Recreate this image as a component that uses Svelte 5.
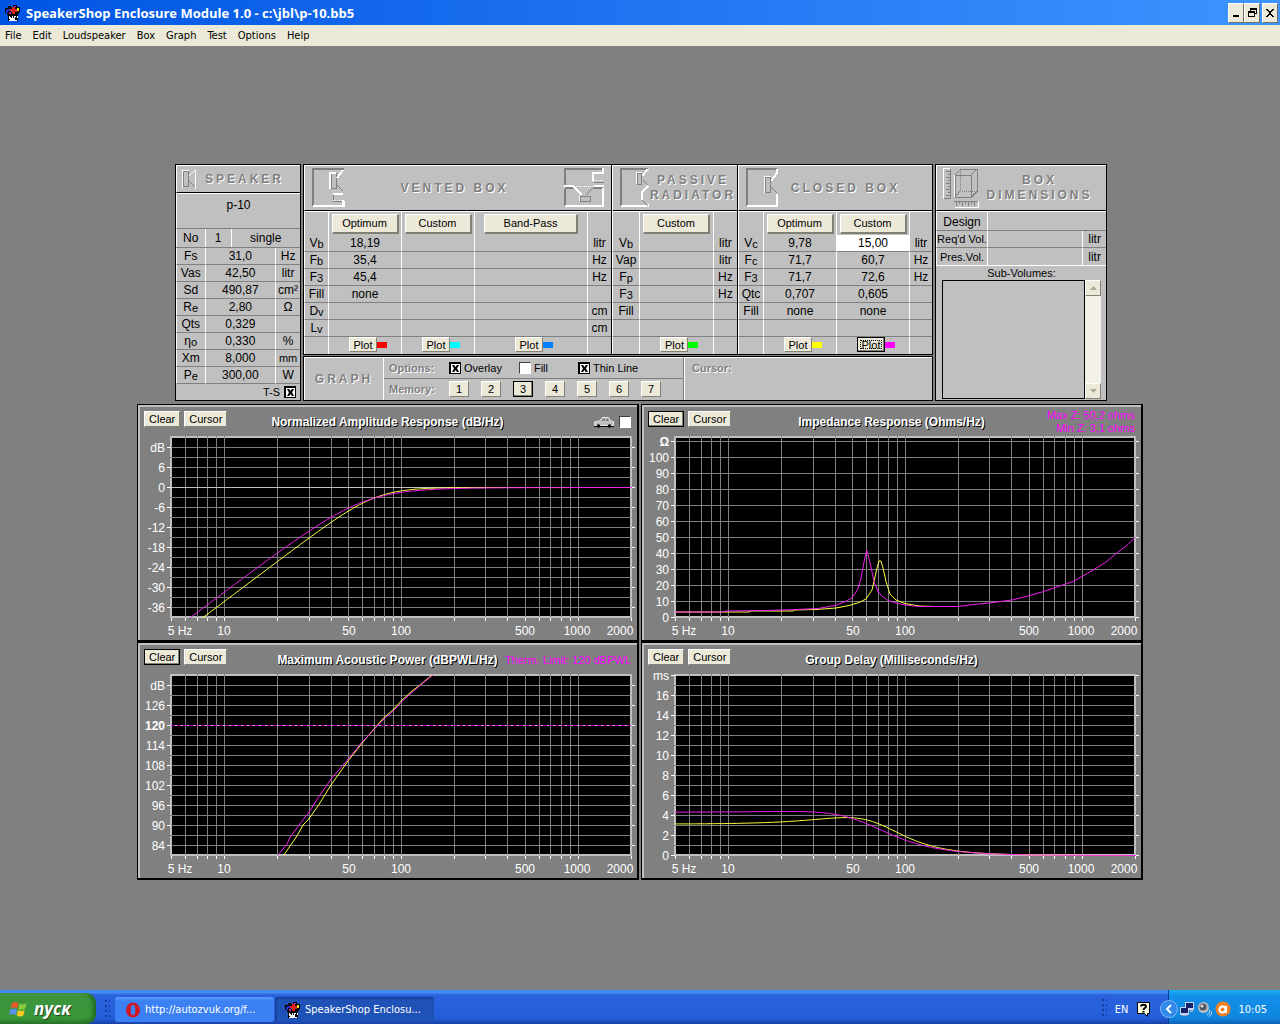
<svelte:options runes={false} />

<script>
  const menus = ['File', 'Edit', 'Loudspeaker', 'Box', 'Graph', 'Test', 'Options', 'Help'];

  // [label, subscript, value, unit]
  const speaker = [
    ['Fs', '', '31,0', 'Hz'],
    ['Vas', '', '42,50', 'litr'],
    ['Sd', '', '490,87', 'cm²'],
    ['R', 'e', '2,80', 'Ω'],
    ['Qts', '', '0,329', ''],
    ['η', 'o', '0,330', '%'],
    ['Xm', '', '8,000', 'mm'],
    ['P', 'e', '300,00', 'W']
  ];

  const sections = [
    {
      id: 'vented',
      title: 'VENTED BOX',
      widths: [24, 73, 73, 113, 24],
      heads: ['Optimum', 'Custom', 'Band-Pass'],
      rows: [
        ['V', 'b', ['18,19', '', ''], 'litr'],
        ['F', 'b', ['35,4', '', ''], 'Hz'],
        ['F', '3', ['45,4', '', ''], 'Hz'],
        ['Fill', '', ['none', '', ''], ''],
        ['D', 'v', ['', '', ''], 'cm'],
        ['L', 'v', ['', '', ''], 'cm']
      ],
      plots: ['#ff0000', '#00ffff', '#0080ff']
    },
    {
      id: 'passive',
      title: 'PASSIVE RADIATOR',
      widths: [27, 73, 24],
      heads: ['Custom'],
      rows: [
        ['V', 'b', [''], 'litr'],
        ['Vap', '', [''], 'litr'],
        ['F', 'p', [''], 'Hz'],
        ['F', '3', [''], 'Hz'],
        ['Fill', '', [''], ''],
        ['', '', [''], '']
      ],
      plots: ['#00ff00']
    },
    {
      id: 'closed',
      title: 'CLOSED BOX',
      widths: [25, 73, 73, 23],
      heads: ['Optimum', 'Custom'],
      rows: [
        ['V', 'c', ['9,78', '15,00'], 'litr'],
        ['F', 'c', ['71,7', '60,7'], 'Hz'],
        ['F', '3', ['71,7', '72,6'], 'Hz'],
        ['Qtc', '', ['0,707', '0,605'], ''],
        ['Fill', '', ['none', 'none'], ''],
        ['', '', ['', ''], '']
      ],
      plots: ['#ffff00', '#ff00ff']
    }
  ];

  const options = [['Overlay', true], ['Fill', false], ['Thin Line', true]];

  // plot area inside each graph's viewBox
  const L = 33, R = 493, T = 2, B = 182;
  const DECADE = (R - L) / Math.log10(2000 / 5);
  const fx = (f) => L + DECADE * Math.log10(f / 5);
  const freqs = [6, 7, 8, 9, 10, 20, 30, 40, 50, 60, 70, 80, 90, 100, 200, 300, 400, 500, 600, 700, 800, 900, 1000];
  const xLabels = [['5 Hz', 42], ['10', 86], ['50', 211], ['100', 263], ['500', 387], ['1000', 439], ['2000', 482]];

  function curve(fn) {
    let pts = [];
    for (let f = 5; f <= 2060; f *= 1.03) pts.push(`${fx(f).toFixed(1)},${fn(f).toFixed(1)}`);
    return pts.join(' ');
  }
  // second order closed box: level and group delay
  const level = (fc, q) => (f) => {
    const x = f / fc;
    const h = (x * x) / Math.sqrt((1 - x * x) ** 2 + (x / q) ** 2);
    return 52.5 - 20 * Math.log10(h) * (10 / 3);
  };
  const delay = (fc, q) => (f) => {
    const x = f / fc;
    const t = (1000 / (2 * Math.PI * fc * q)) * (1 + x * x) / ((1 - x * x) ** 2 + (x / q) ** 2);
    return 182.5 - t * 10;
  };

  const steps = (from, gap, n) => Array.from({ length: n }, (_, i) => from + i * gap);

  const graphs = [
    {
      id: 'amp',
      title: 'Normalized Amplitude Response (dB/Hz)',
      car: true,
      lines: steps(12.5, 10, 17),
      labels: ['dB', '6', '0', '-6', '-12', '-18', '-24', '-30', '-36'],
      start: 12.5, gap: 20,
      yellow: curve(level(71.7, 0.707)),
      pink: curve(level(60.7, 0.605))
    },
    {
      id: 'imp',
      title: 'Impedance Response (Ohms/Hz)',
      active: true,
      notes: ['Max Z: 50,2 ohms', 'Min Z: 3,1 ohms'],
      lines: steps(6.5, 16, 11),
      labels: ['Ω', '100', '90', '80', '70', '60', '50', '40', '30', '20', '10', '0'],
      start: 6.5, gap: 16,
      yellow: '33,177 107,177 109,176 151,176 153,175 174,174.5 194,173 207,170.5 217,167.5 224,164 230,155 232,146.5 235,133 237,126 239,126 241,133 244,146.5 248,159 254,165 263,168.5 277,171 294,171.5',
      pink: '33,177 80,177 84,176 124,175.5 154,174.5 176,173.5 193,170.5 202,167 210,163 216,154 219,143 222,127 224,118 225,115.5 226,120 229,132 232,146.5 236,156.5 240,161 246,165.5 254,168 263,170 277,171.5 316,171.5 331,169.5 347,168 370,165 386,161 400,157 412,153 422,149.5 431,146.5 439,142 452,134.5 464,127 476,117 486,109.5 493,102.5'
    },
    {
      id: 'pow',
      title: 'Maximum Acoustic Power (dBPWL/Hz)',
      active: true,
      notes: ['Therm. Limit: 120 dBPWL'],
      lines: steps(12.5, 10, 17),
      labels: ['dB', '126', '120', '114', '108', '102', '96', '90', '84'],
      start: 12.5, gap: 20,
      limit: 52.5,
      yellow: '146,182 152,173 159,163 165,152 170,147 180,133 193,112 210,88 225,69 236,56 246,44.5 256,36 263,28 274,18 282,12 294,2',
      pink: '140,182 149,171 152,164.5 161,152 170,140.5 181,123.5 193,106 209,87.5 225,68 236,56.5 246,46 256,37.5 263,29.5 274,19.5 282,12.5 295,2'
    },
    {
      id: 'delay',
      title: 'Group Delay (Milliseconds/Hz)',
      lines: steps(12.5, 10, 17),
      labels: ['ms', '16', '14', '12', '10', '8', '6', '4', '2', '0'],
      start: 2.5, gap: 20,
      yellow: curve(delay(71.7, 0.707)),
      pink: curve(delay(60.7, 0.605))
    }
  ];
</script>

{#snippet appIcon()}
  <svg class="app-icon" width="16" height="16" viewBox="0 0 16 16" shape-rendering="crispEdges" aria-hidden="true">
    <path fill="#000" d="M3 1h3v1h2V0h4v2h3v5h-1v2h-1v7H3v-6H2V8H0V3h3z" />
    <path fill="#e02020" d="M7 2h3v2h2v3h-2v2H7V6H5V4h2z" />
    <path fill="#2030d0" d="M2 4h3v2H3v2H1V5h1z" />
    <path fill="#c020c0" d="M4 7h2v2H4zM9 1h2v1H9z" />
    <path fill="#f0e020" d="M12 3h2v3h-2z" />
    <path fill="#20a0a0" d="M6 6h1v1H6z" />
    <path fill="#fff" d="M4 11h1v1h1v1h1v-2h1v2h1v-2h2v1h-1v3h2v1H4v-1h1v-1H4zM12 11h1v2h-1z" />
  </svg>
{/snippet}

{#snippet clearCursor(active)}
  <div class="graph-buttons">
    <button class="btn" class:default={active}>Clear</button>
    <button class="btn">Cursor</button>
  </div>
{/snippet}

<div class="screen">
  <header class="titlebar">
    {@render appIcon()}
    <h1>SpeakerShop Enclosure Module 1.0 - c:\jbl\p-10.bb5</h1>
    <div class="win-buttons">
      <button class="win" aria-label="Minimize"><svg width="11" height="12" shape-rendering="crispEdges"><path d="M2 8h6v2H2z" /></svg></button>
      <button class="win" aria-label="Restore"><svg width="11" height="12" shape-rendering="crispEdges"><path fill-rule="evenodd" d="M3 1h7v6H8v3H1V4h2zM4 3v1h4v2h1V3zM2 6v3h5V6z" /></svg></button>
      <button class="win close" aria-label="Close"><svg width="11" height="12" shape-rendering="crispEdges"><path d="M1 2h2v1h1v1h2V3h1V2h2v1H8v1H7v1H6v2h1v1h1v1h1v1H7V9H6V8H4v1H3v1H1V9h1V8h1V7h1V5H3V4H2V3H1z" /></svg></button>
    </div>
  </header>

  <nav class="menubar">
    {#each menus as menu}<button>{menu}</button>{/each}
  </nav>

  <main>
    <div class="panels">
      <section class="panel speaker">
        <div class="head small">
          <svg width="16" height="22" viewBox="0 0 16 22" fill="none" shape-rendering="crispEdges" aria-hidden="true">
            <path stroke="#fff" d="M1.5 19.5v-17h6M14.5 20.5v-19M8 8l6-6" />
            <path stroke="#808080" d="M2.5 3.5v15h5v-15zM8 13l6 6" />
          </svg>
          <h2>SPEAKER</h2>
        </div>
        <div class="name">p-10</div>
        <div class="count"><span>No</span><span>1</span><span>single</span></div>
        <table>
          <colgroup><col style="width: 23%" /><col style="width: 57%" /><col style="width: 20%" /></colgroup>
          <tbody>
            {#each speaker as [label, sub, value, unit]}
              <tr><th scope="row">{label}<span class="sub">{sub}</span></th><td>{value}</td><td class:tight={unit === 'mm'}>{unit}</td></tr>
            {/each}
          </tbody>
        </table>
        <label class="ts">T-S <input type="checkbox" checked /></label>
      </section>

      <div class="middle">
        <div class="panel boxes">
          {#each sections as s}
            <section class="box {s.id}">
              <div class="head">
                {#if s.id === 'vented'}
                  <svg width="34" height="42" viewBox="0 0 34 42" fill="none" shape-rendering="crispEdges" aria-hidden="true">
                    <path stroke="#808080" stroke-width="2" d="M33 2H2v37" />
                    <path stroke="#fff" stroke-width="2" d="M2 39h31v-5" />
                    <path stroke="#808080" d="M20.500 6.500h5v15h-5zM26 18l6 6" />
                    <path stroke="#fff" stroke-width="2" d="M19 22V6h6M26 11l6-8M22 27h10M32 33v6" />
                    <path stroke="#808080" d="M22.500 28v6M22 34.500h9" />
                    <path stroke="#fff" stroke-dasharray="1 1" d="M22 33.500h10" />
                  </svg>
                {:else if s.id === 'passive'}
                  <svg width="30" height="42" viewBox="0 0 30 42" fill="none" shape-rendering="crispEdges" aria-hidden="true">
                    <path stroke="#808080" stroke-width="2" d="M29 2H2v37" />
                    <path stroke="#fff" stroke-width="2" d="M2 39h27v-2M23 9l6-7M29 19l-6 6v8" />
                    <path stroke="#808080" d="M18.500 6.500h4v11h-4zM24 13l5 5M23 33l6 6" />
                    <path stroke="#fff" d="M17.500 17V5.500h5" />
                  </svg>
                {:else}
                  <svg width="34" height="42" viewBox="0 0 34 42" fill="none" shape-rendering="crispEdges" aria-hidden="true">
                    <path stroke="#808080" stroke-width="2" d="M32 2H2v37" />
                    <path stroke="#fff" stroke-width="2" d="M2 39h30V27M26 14l6-8V2" />
                    <path stroke="#808080" d="M20.500 10.500h5v15h-5zM26 20l6 6" />
                    <path stroke="#fff" d="M19.500 26V9.500h6" />
                  </svg>
                {/if}
                <h2>{s.title}</h2>
                {#if s.id === 'vented'}
                  <svg width="41" height="42" viewBox="0 0 41 42" fill="none" shape-rendering="crispEdges" aria-hidden="true">
                    <path stroke="#808080" stroke-width="2" d="M39 2H1v17M1 22v17M1 21h9M30 21h9" />
                    <path stroke="#fff" stroke-width="2" d="M39 21v18H1M0 19h10M30 19h10M10 20l8 8M39 1v5H29v8" />
                    <path stroke="#fff" d="M15.500 34v-5h10" />
                    <path stroke="#808080" d="M30 20l-8 8M16.500 29.500h10v5h-10zM30 15.500h10" />
                    <path stroke="#fff" stroke-dasharray="1 1" d="M10 19.500h20M30 13.500h10" />
                  </svg>
                {/if}
              </div>
              <table>
                <colgroup>{#each s.widths as w}<col style="width: {w}px" />{/each}</colgroup>
                <thead>
                  <tr><td></td>{#each s.heads as head}<th><button class="btn wide" class:band={head === 'Band-Pass'}>{head}</button></th>{/each}<td></td></tr>
                </thead>
                <tbody>
                  {#each s.rows as [label, sub, values, unit]}
                    <tr>
                      <th scope="row">{label}<span class="sub">{sub}</span></th>
                      {#each values as value}
                        <td>{#if value === '15,00'}<input class="edit" type="text" {value} aria-label="Custom Vc" />{:else}{value}{/if}</td>
                      {/each}
                      <td>{unit}</td>
                    </tr>
                  {/each}
                  <tr class="plots">
                    <td></td>
                    {#each s.plots as color}
                      <td><div class="plot"><button class="btn" class:default={color === '#ff00ff'} class:focused={color === '#ff00ff'}>Plot</button><i style="background: {color}"></i></div></td>
                    {/each}
                    <td></td>
                  </tr>
                </tbody>
              </table>
            </section>
          {/each}
        </div>

        <section class="panel graph-bar">
          <h2>GRAPH</h2>
          <div class="settings">
            <div class="options">
              <b>Options:</b>
              {#each options as [label, checked]}
                <label><input type="checkbox" {checked} />{label}</label>
              {/each}
            </div>
            <div class="memory">
              <b>Memory:</b>
              {#each [1, 2, 3, 4, 5, 6, 7] as n}<button class="btn" class:default={n === 3}>{n}</button>{/each}
            </div>
          </div>
          <div class="cursor"><b>Cursor:</b></div>
        </section>
      </div>

      <section class="panel dims">
        <div class="head">
          <svg width="36" height="42" viewBox="0 0 36 42" fill="none" shape-rendering="crispEdges" aria-hidden="true">
            <path stroke="#fff" d="M.5 32V1.500h6M12 40.500h23.500V34M11.500 30V8" />
            <path stroke="#808080" d="M7.500 2v29H1M3 4.500h4M5 7.500h2M3 10.500h4M5 13.500h2M3 16.500h4M5 19.500h2M3 22.500h4M5 25.500h2M3 28.500h4M11 34.500h24M13.500 35v4M16.500 35v2M19.500 35v4M22.500 35v2M25.500 35v4M28.500 35v2M31.500 35v4" />
            <path stroke="#808080" d="M12.500 8.500h16v22h-16zM12 8l6-6h16.500v22l-6 6M28 8l6-6" />
            <path stroke="#808080" stroke-dasharray="1 1" d="M17.500 3v21h16M17 24l-5 6" />
          </svg>
          <h2>BOX DIMENSIONS</h2>
        </div>
        <table>
          <colgroup><col style="width: 30%" /><col style="width: 56%" /><col style="width: 14%" /></colgroup>
          <tbody>
            <tr><th scope="row">Design</th><td colspan="2"></td></tr>
            <tr><th scope="row" class="tight">Req'd Vol.</th><td></td><td>litr</td></tr>
            <tr><th scope="row" class="tight">Pres.Vol.</th><td></td><td>litr</td></tr>
          </tbody>
        </table>
        <div class="subs">
          <span>Sub-Volumes:</span>
          <div class="list">
            <div class="items"></div>
            <div class="scroll">
              <button class="btn" aria-label="Scroll up"><svg width="7" height="4"><path d="M0 4h7L3.500 0z" /></svg></button>
              <button class="btn" aria-label="Scroll down"><svg width="7" height="4"><path d="M0 0h7L3.500 4z" /></svg></button>
            </div>
          </div>
        </div>
      </section>
    </div>

    <div class="graphs">
      {#each graphs as g}
        <section class="graph">
          <div class="graph-head">
            {@render clearCursor(g.active)}
            <h3>{g.title}</h3>
            <div class="notes">
              {#if g.car}
                <svg width="22" height="12" viewBox="0 0 22 12" aria-hidden="true">
                  <path fill="#c0c0c0" stroke="#e8e8e8" d="M1.500 9.500V6l5-1 3-3.500h6l2 3.500 3 .5v4z" />
                  <path fill="#808080" d="M8 5l2-2.500h2V5zM13 2.500h2L16 5h-3z" />
                  <path stroke="#000" d="M1 10.500h20" />
                  <circle cx="5.500" cy="10" r="1.800" /><circle cx="16.500" cy="10" r="1.800" />
                </svg>
                <input type="checkbox" aria-label="In-car response" />
              {:else if g.notes}
                {#each g.notes as note}<span>{note}</span>{/each}
              {/if}
            </div>
          </div>
          <svg class="chart" viewBox="0 0 499 205" role="img" aria-label={g.title}>
            <clipPath id="clip-{g.id}"><rect x={L} y={T} width={R - L + 1} height={B - T + 1} /></clipPath>
            <g shape-rendering="crispEdges">
              <rect class="frame" x={L} y={T} width={R - L} height={B - T} />
              {#each freqs as f}
                <line class="grid" x1={Math.round(fx(f)) + 0.5} x2={Math.round(fx(f)) + 0.5} y1={T - 1} y2={B} />
              {/each}
              {#each [5, ...freqs, 2000] as f}
                <line class="tick" x1={Math.round(fx(f)) + 0.5} x2={Math.round(fx(f)) + 0.5} y1={B + 1} y2={B + 4} />
              {/each}
              {#each g.lines as y}
                <line class="grid" class:zero={g.id === 'amp' && y === 52.5} x1={L - 2} x2={R} y1={y} y2={y} />
              {/each}
              {#each g.labels as label, i}
                <line class="tick" x1={L - 4} x2={L} y1={g.start + i * g.gap} y2={g.start + i * g.gap} />
                <line class="tick" x1={R + 1} x2={R + 4} y1={g.start + i * g.gap} y2={g.start + i * g.gap} />
              {/each}
            </g>
            {#if g.limit}
              <line class="zero" x1={L} x2={R} y1={g.limit} y2={g.limit} />
              <line class="limit" x1={L} x2={R} y1={g.limit} y2={g.limit} />
            {/if}
            {#each g.labels as label, i}
              <text x="27" y={g.start + i * g.gap + 4} text-anchor="end" class:bold={(g.limit && label === '120') || label === 'Ω'}>{label}</text>
            {/each}
            {#each xLabels as [label, x]}
              <text {x} y="200" text-anchor="middle">{label}</text>
            {/each}
            <g clip-path="url(#clip-{g.id})">
              <polyline class="yellow" points={g.yellow} />
              <polyline class="pink" points={g.pink} />
            </g>
          </svg>
        </section>
      {/each}
    </div>
  </main>

  <footer class="taskbar">
    <button class="start">
      <svg width="20" height="20" viewBox="0 0 20 20" aria-hidden="true">
        <path fill="#e8592b" d="M3 4c2-1.500 4-1.500 6.500 0L8.300 9.500C6 8.300 4 8.300 1.700 9.500z" />
        <path fill="#8ccb3a" d="M10.500 4.500c2.500 1.300 4.500 1.300 7-.2L16 9.800c-2.300 1.300-4.300 1.300-6.700.1z" />
        <path fill="#5a8ff0" d="M1.400 10.600c2.300-1.200 4.300-1.200 6.600 0L6.700 16c-2.300-1.200-4.300-1.200-6.500 0z" />
        <path fill="#fbc926" d="M9 11c2.400 1.200 4.400 1.200 6.700 0l-1.400 5.500c-2.300 1.300-4.300 1.300-6.600 0z" />
      </svg>
      <span>пуск</span>
    </button>
    <i class="grip"></i>
    <button class="task">
      <svg width="16" height="16" viewBox="0 0 16 16" aria-hidden="true">
        <ellipse cx="8" cy="8" rx="7" ry="7.500" fill="#d01820" /><ellipse cx="8" cy="8" rx="2.300" ry="5.200" fill="#3c81f3" />
      </svg>
      http://autozvuk.org/f...
    </button>
    <button class="task current">{@render appIcon()} SpeakerShop Enclosu...</button>
    <div class="lang">
      <i class="grip"></i>
      <span>EN</span>
      <svg width="14" height="15" viewBox="0 0 14 15" aria-hidden="true">
        <path fill="#ffffe1" stroke="#000" d="M.5.5h12v11h-2v3l-3-3h-7z" />
        <path fill="none" stroke="#000" stroke-width="2" d="M4 4.500C4 2 9 2 9 4.500 9 6 6.500 6 6.500 8M6.500 9v1.500" />
      </svg>
    </div>
    <div class="tray">
      <button class="expand" aria-label="Show hidden icons"><svg width="16" height="16" viewBox="0 0 16 16"><path fill="none" stroke="#fff" stroke-width="2" d="M10 4L6 8l4 4" /></svg></button>
      <svg width="16" height="16" viewBox="0 0 16 16" aria-hidden="true">
        <path fill="#c8d4e8" d="M6 1h9v8H6zM1 6h9v8H1z" /><path fill="#16226e" d="M7 2h7v5H7zM2 7h7v5H2z" /><path fill="#8fa4d0" d="M3 14h5v1H3zM11 9h3v2h-3z" />
      </svg>
      <svg width="16" height="16" viewBox="0 0 16 16" aria-hidden="true">
        <circle cx="6.500" cy="6.500" r="5.500" fill="#b8bcc0" /><circle cx="6" cy="6" r="3.500" fill="#50565c" /><circle cx="5" cy="5" r="1.500" fill="#e0e4e8" />
        <path fill="none" stroke="#c4dcf4" d="M10 14q3-1 3-5M12 15.500q3-2 3-5" />
      </svg>
      <svg width="16" height="16" viewBox="0 0 16 16" aria-hidden="true">
        <circle cx="8" cy="8" r="7.500" fill="#f08020" /><circle cx="7.500" cy="8.500" r="3" fill="none" stroke="#fff" stroke-width="2" /><path stroke="#fff" stroke-width="2" d="M11 5v7" />
      </svg>
      <time>10:05</time>
    </div>
  </footer>
</div>

<style>
  :global(body) { margin: 0; }
  .screen {
    display: flex;
    flex-direction: column;
    min-height: 100vh;
    background: #808080;
    font-family: "Liberation Sans", Arial, sans-serif;
    font-size: 12px;
    color: #000;
  }
  .screen :is(h1, h2, h3) { margin: 0; }
  svg { display: block; flex: none; }
  button, input { font: inherit; color: inherit; margin: 0; padding: 0; border: 0; border-radius: 0; }

  .titlebar {
    display: flex;
    align-items: center;
    gap: 5px;
    height: 25px;
    padding: 0 2px 0 5px;
    background: linear-gradient(90deg, #0054e3, #3d95ff);
  }
  .titlebar h1 {
    flex: 1;
    color: #fff;
    font: bold 13px/20px "Open Sans", sans-serif;
  }
  .win-buttons { display: flex; }
  .win {
    display: grid;
    place-items: center;
    width: 16px;
    height: 20px;
    background: #ece9d8;
    border: 1px solid;
    border-color: #fff #716f64 #716f64 #fff;
  }
  .close { margin-left: 2px; }

  .menubar {
    display: flex;
    gap: 11px;
    height: 21px;
    padding-left: 5px;
    background: #ece9d8;
    font: 11px "DejaVu Sans Condensed", sans-serif;
  }
  .menubar button { background: none; }

  main {
    flex: 1;
    display: flex;
    flex-direction: column;
    align-items: center;
    gap: 3px;
    padding: 118px 0 20px;
  }
  .panels {
    display: grid;
    grid-template-columns: 126fr 630fr 172fr;
    gap: 2px;
    box-sizing: border-box;
    width: 100%;
    max-width: 934px;
    padding-left: 2px;
  }
  .panel {
    min-width: 0;
    background: #c0c0c0;
    border: 1px solid #000;
    box-sizing: border-box;
  }
  .head {
    display: flex;
    align-items: center;
    height: 46px;
    box-sizing: border-box;
    padding: 0 6px;
    border-top: 1px solid #fff;
    border-left: 1px solid #fff;
    border-bottom: 1px solid #000;
  }
  .head.small { height: 28px; padding: 0 8px 0 4px; }
  h2 {
    flex: 1;
    color: #808080;
    font-size: 12px;
    line-height: 15px;
    letter-spacing: 3px;
    text-align: center;
    text-shadow: 1px 1px #fff;
  }
  .speaker, .dims {
    display: flex;
    flex-direction: column;
  }
  .name {
    height: 36px;
    line-height: 22px;
    text-align: center;
    border: 1px solid #fff;
    border-width: 1px 0 0 1px;
    border-bottom: 1px solid #808080;
    box-sizing: border-box;
  }
  .count {
    display: grid;
    grid-template-columns: 23% 21% 56%;
    line-height: 18px;
    text-align: center;
    border-bottom: 1px solid #808080;
  }
  .count span { border-left: 1px solid #fff; }

  table {
    width: 100%;
    table-layout: fixed;
    border-collapse: separate;
    border-spacing: 0;
  }
  th, td {
    height: 17px;
    box-sizing: border-box;
    padding: 0;
    line-height: 16px;
    font-weight: normal;
    text-align: center;
    white-space: nowrap;
    border-left: 1px solid #fff;
    border-bottom: 1px solid #808080;
  }
  thead th, thead td {
    height: 24px;
    border-bottom: 0;
    border-top: 1px solid #fff;
  }
  .plots td { vertical-align: top; border-bottom: 0; }
  .sub { font-size: 11px; vertical-align: -1px; line-height: 1px; }
  .tight { font-size: 11px; }
  .ts {
    display: flex;
    align-items: center;
    justify-content: flex-end;
    gap: 4px;
    flex: 1;
    padding-right: 4px;
    font-size: 11px;
  }

  .btn {
    height: 16px;
    background: #ece9d8;
    border: 1px solid;
    border-color: #fff #808074 #808074 #fff;
    font-size: 11px;
    line-height: 12px;
    white-space: nowrap;
  }
  .btn.default { border-color: #000; box-shadow: inset -1px -1px #808074; }
  .btn.wide {
    display: block;
    width: 67px;
    height: 20px;
    margin: 0 auto;
    border-width: 1px 2px 2px 1px;
  }
  .btn.band { width: 94px; }
  .plot {
    display: flex;
    align-items: center;
    justify-content: center;
    padding-left: 6px;
  }
  .plot .btn { width: 28px; height: 15px; }
  .plot .focused { outline: 1px dotted #000; outline-offset: -4px; }
  .plot i { width: 10px; height: 6px; }
  .edit {
    display: block;
    width: 100%;
    height: 16px;
    background: #fff;
    text-align: center;
  }

  input[type='checkbox'] {
    appearance: none;
    display: grid;
    place-items: center;
    flex: none;
    width: 12px;
    height: 12px;
    background: #fff;
    border: 1px solid;
    border-color: #404040 #fff #fff #404040;
  }
  input[type='checkbox']:checked { border: 2px solid #000; border-width: 2px 1px 1px 2px; }
  input[type='checkbox']:checked::before {
    content: '';
    width: 7px;
    height: 7px;
    background: #000;
    clip-path: polygon(0 0, 30% 0, 50% 28%, 70% 0, 100% 0, 72% 50%, 100% 100%, 70% 100%, 50% 72%, 30% 100%, 0 100%, 28% 50%);
  }

  .middle { display: flex; flex-direction: column; gap: 1px; min-width: 0; }
  .boxes {
    display: grid;
    grid-template-columns: 307fr 126fr 195fr;
  }
  .box { min-width: 0; }
  .box + .box { border-left: 1px solid #000; }
  .passive .head { padding-right: 0; }
  .closed .head { padding-right: 20px; }

  .graph-bar {
    display: grid;
    grid-template-columns: 79fr 301fr 248fr;
    flex: 1;
  }
  .graph-bar > * { border-top: 1px solid #fff; border-left: 1px solid #fff; }
  .graph-bar h2 { line-height: 42px; }
  .settings { border-right: 1px solid #808080; }
  .options, .memory {
    display: flex;
    align-items: center;
    height: 20px;
    padding-left: 5px;
    font-size: 11px;
  }
  .options { border-bottom: 1px solid #808080; }
  .graph-bar b { color: #808080; text-shadow: 1px 1px #fff; font-size: 11px; }
  .options b, .memory b { width: 60px; }
  .options label {
    display: flex;
    align-items: center;
    gap: 3px;
    margin-right: 17px;
  }
  .options label:nth-of-type(2) { margin-right: 30px; }
  .memory .btn { width: 20px; margin-right: 12px; }
  .cursor { padding: 3px 7px; }

  .dims table { border-bottom: 1px solid #fff; }
  .dims tr:first-child :is(th, td) { height: 20px; border-top: 1px solid #fff; padding-top: 2px; }
  .dims tr:last-child :is(th, td) { border-bottom: 0; }
  .subs {
    display: flex;
    flex-direction: column;
    flex: 1;
    padding: 0 5px 1px 6px;
    font-size: 11px;
    line-height: 14px;
    text-align: center;
  }
  .list { display: flex; flex: 1; }
  .items { flex: 1; border: 1px solid #000; }
  .scroll {
    display: flex;
    flex-direction: column;
    justify-content: space-between;
    width: 16px;
    background: #f4f2e8;
  }
  .scroll .btn { display: grid; place-items: center; fill: #aca899; }

  .graphs {
    display: grid;
    grid-template-columns: 1fr 1fr;
    column-gap: 2px;
    width: 100%;
    max-width: 1006px;
  }
  .graph {
    min-width: 0;
    box-sizing: border-box;
    border: solid #000;
    border-width: 1px 2px 2px 1px;
    box-shadow: inset 2px 2px #c0c0c0;
  }
  .graph-head {
    display: grid;
    grid-template-columns: 1fr auto 1fr;
    align-items: center;
    height: 30px;
    box-sizing: border-box;
    padding: 4px 6px 0;
  }
  .graph-buttons { display: flex; gap: 4px; align-self: start; padding-top: 2px; }
  .graph-buttons .btn { padding: 0 4px; }
  h3 {
    color: #fff;
    font-size: 12px;
    text-shadow: 1px 1px #000;
    white-space: nowrap;
  }
  .notes {
    display: flex;
    flex-wrap: wrap;
    align-items: center;
    justify-content: flex-end;
    column-gap: 4px;
    color: #ff00ff;
    font-size: 11px;
    line-height: 13px;
    white-space: nowrap;
  }
  .chart {
    width: 100%;
    height: auto;
    overflow: visible;
  }
  .chart text { fill: #fff; font-size: 12px; }
  .chart .bold { font-weight: bold; }
  .frame { fill: #000; stroke: #c0c0c0; stroke-width: 2; }
  .grid { stroke: #808080; }
  .zero { stroke: #c0c0c0; }
  .tick { stroke: #fff; }
  .limit { stroke: #c800c8; stroke-dasharray: 4 2; }
  polyline { fill: none; }
  .yellow { stroke: #ffff40; }
  .pink { stroke: #f020f0; }

  .taskbar {
    display: flex;
    align-items: stretch;
    height: 34px;
    background: linear-gradient(#3a80ee, #4a92f8 2px, #2a62dc 5px, #245edb 28px, #1941a5);
    color: #fff;
    font: 11px "DejaVu Sans Condensed", sans-serif;
  }
  .start {
    display: flex;
    align-items: center;
    gap: 5px;
    width: 96px;
    margin-top: 3px;
    padding-left: 9px;
    background: linear-gradient(#5eac56, #3c933c 4px, #3a983a 24px, #2c7a2c);
    border-radius: 0 10px 10px 0;
    box-shadow: inset -3px 0 4px #206820;
    font: italic bold 17px "Open Sans", sans-serif;
    text-shadow: 1px 1px 1px #204020;
  }
  .grip {
    width: 5px;
    margin: 10px 5px 4px 9px;
    background: radial-gradient(circle at 1px 1px, #143c98 1px, transparent 1px) 0 0 / 4px 5px;
  }
  .task {
    display: flex;
    align-items: center;
    gap: 4px;
    width: 159px;
    margin: 7px 1px 2px 0;
    padding-left: 10px;
    background: linear-gradient(#5a9cff, #3c81f3 4px);
    border-radius: 3px;
    white-space: nowrap;
  }
  .task.current { background: #1e52b7; box-shadow: inset 1px 1px 2px #123684; }
  .lang {
    display: flex;
    align-items: center;
    margin-left: auto;
    padding-top: 4px;
  }
  .lang .grip { height: 20px; margin: 0 8px 0 0; }
  .lang span { margin-right: 9px; }
  .tray {
    display: flex;
    align-items: center;
    gap: 2px;
    margin-left: 17px;
    padding: 4px 13px 0 0;
    background: linear-gradient(#18b0f2, #1290e9 6px, #0f86e0 28px, #0c60b0);
    border-left: 1px solid #0a3c94;
  }
  .expand {
    width: 16px;
    height: 16px;
    margin-left: -8px;
    border-radius: 50%;
    background: #3088e8;
    box-shadow: 0 0 0 1px #78b8f8;
  }
  .tray time { margin-left: 5px; }
</style>
